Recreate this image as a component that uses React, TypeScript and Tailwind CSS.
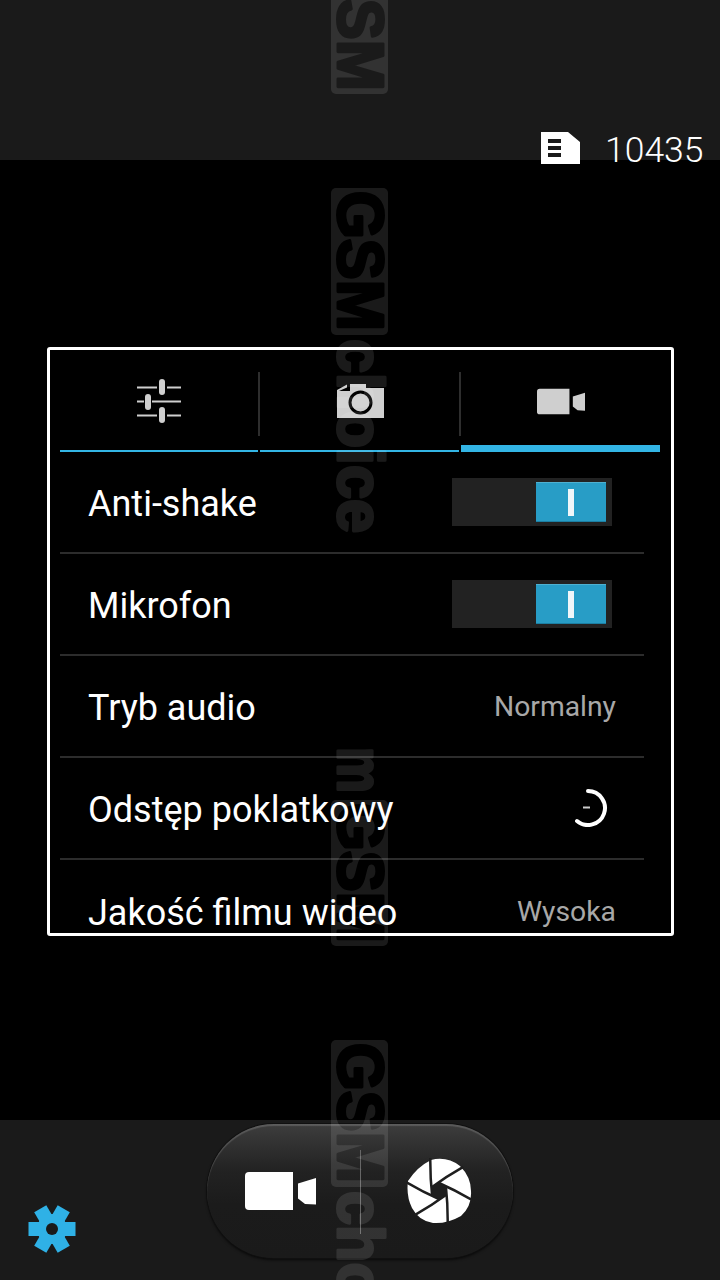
import React from "react";

function Sliders() {
  return (
    <svg width="44" height="44" viewBox="0 0 44 44" fill="none">
      <g stroke="#cfcfcf" strokeWidth="2.2">
        <path d="M0 8.500H20M30 8.500H44M0 22.500H7M15 22.500H44M0 36.500H20M30 36.500H44" />
      </g>
      <g fill="#cfcfcf">
        <rect x="22" y="0" width="6" height="16" rx="3" />
        <rect x="8" y="15" width="6" height="16" rx="3" />
        <rect x="22" y="28" width="6" height="16" rx="3" />
      </g>
    </svg>
  );
}

function Camera() {
  return (
    <svg width="47" height="35" viewBox="0 0 47 35">
      <path d="M0 7L10 1.500V4.500L2 8H13V1H29V5H47V35H0Z" fill="#cfcfcf" />
      <circle cx="23.500" cy="19.500" r="10.500" fill="#cfcfcf" stroke="#000" strokeWidth="3" />
    </svg>
  );
}

function Video({ color, w, h }: { color: string; w: number; h: number }) {
  return (
    <svg width={w} height={h} viewBox="0 0 71 38" fill={color}>
      <path d="M4 0H48V38H4Q0 38 0 34V4Q0 0 4 0Z" />
      <path d="M53 11.500L71 6V32.500L60 32 53 26.500Z" />
    </svg>
  );
}

function Shutter() {
  const angles = [0, 60, 120, 180, 240, 300];
  return (
    <svg width="66" height="66" viewBox="-33 -33 66 66">
      <path
        d="M-8 -31Q8 -35 21 -25Q32 -14 32 0Q33 15 22 25Q8 33 -6 32Q-20 30 -27 17Q-33 5 -31 -10Q-22 -24 -8 -31Z"
        fill="#fff"
      />
      {angles.map((a) => (
        <path
          key={a}
          d="M-33 -9Q-16 1 0 8"
          fill="none"
          stroke="#1e1e1e"
          strokeWidth="2.500"
          transform={`rotate(${a})`}
        />
      ))}
      <polygon points="0,8.500 7.400,4.250 7.400,-4.250 0,-8.500 -7.400,-4.250 -7.400,4.250" fill="#1e1e1e" />
    </svg>
  );
}

function Gear() {
  const angles = [0, 60, 120];
  return (
    <svg width="48" height="48" viewBox="-24 -24 48 48">
      <circle r="15" fill="#2fb1e6" />
      {angles.map((a) => (
        <rect
          key={a}
          x="-23.500"
          y="-7"
          width="47"
          height="14"
          fill="#2fb1e6"
          transform={`rotate(${a})`}
        />
      ))}
      <circle r="6" fill="#1a1a1a" />
    </svg>
  );
}

function Timer() {
  return (
    <svg width="36" height="38" viewBox="0 0 36 38" fill="none">
      <path d="M16 2A17 17 0 1 1 5 32" stroke="#fff" strokeWidth="4" strokeLinecap="round" />
      <path d="M11 18.500H18" stroke="#ccc" strokeWidth="2" />
    </svg>
  );
}

function Toggle() {
  return (
    <div className="flex h-[48px] w-[160px] items-center justify-end bg-[#222222] pr-[6px]">
      <div className="flex h-[40px] w-[70px] items-center justify-center border-t border-b border-t-[#4fb0d0] border-b-[#1c7fa3] bg-[#289dc6]">
        <div className="h-[27px] w-[6px] bg-[#f0f6f9]" />
      </div>
    </div>
  );
}

function Row({ label, children, last }: { label: string; children: React.ReactNode; last?: boolean }) {
  return (
    <div className={`flex h-[102px] w-[584px] shrink-0 items-center justify-between ${last ? "" : "border-b-2 border-[#2c2c2c]"}`}>
      <span className="pt-[4px] pl-[28px] text-[36px] leading-none text-white">{label}</span>
      {children}
    </div>
  );
}

function Value({ text }: { text: string }) {
  return <span className="pt-[3px] pr-[28px] text-[28.300px] leading-none text-[#a8a8a8]">{text}</span>;
}

const wm = { fontFamily: "'Liberation Sans', sans-serif", fontWeight: 700, fontSize: 64 } as const;

function Watermark() {
  const boxes = [
    { y: -52, h: 146 },
    { y: 188, h: 147 },
    { y: 800, h: 146 },
    { y: 1040, h: 147 },
  ];
  return (
    <svg className="pointer-events-none absolute top-0 left-0" width="720" height="1280">
      <defs>
        <mask id="cut" maskUnits="userSpaceOnUse" x="0" y="-60" width="720" height="1400">
          <rect x="0" y="-60" width="720" height="1400" fill="#fff" />
          {boxes.map((b) => (
            <text
              key={b.y}
              transform={`translate(337.500 ${b.y + 3}) rotate(90)`}
              fill="#000"
              stroke="#000"
              strokeWidth="3"
              strokeLinejoin="round"
              textLength="140"
              lengthAdjust="spacingAndGlyphs"
              style={wm}
            >
              GSM
            </text>
          ))}
        </mask>
      </defs>
      <g opacity="0.1" fill="#fff">
        <g mask="url(#cut)">
          {boxes.map((b) => (
            <rect key={b.y} x="331" y={b.y} width="57" height={b.h} rx="5" />
          ))}
        </g>
        <g stroke="#fff" strokeWidth="3" strokeLinejoin="round">
          <text transform="translate(337.500 339) rotate(90)" textLength="194" lengthAdjust="spacingAndGlyphs" style={wm}>choice</text>
          <text transform="translate(337.500 1191) rotate(90)" textLength="194" lengthAdjust="spacingAndGlyphs" style={wm}>choice</text>
          <text transform="translate(337.500 747) rotate(90)" textLength="46" lengthAdjust="spacingAndGlyphs" style={wm}>m</text>
        </g>
      </g>
    </svg>
  );
}

export default function App() {
  return (
    <div className="relative flex h-[1280px] w-[720px] flex-col overflow-hidden bg-black font-['Roboto',sans-serif]">
      <div className="h-[160px] shrink-0 bg-[#1a1a1a]" />

      <div className="flex-1 pt-[187px] pl-[47px]">
        <div className="h-[589px] w-[627px] overflow-hidden rounded-[3px] border-[3px] border-white pl-[10px]">
          <div className="flex h-[102px] w-[600px] items-stretch">
            <div className="flex w-[198px] items-center justify-center border-b-2 border-[#33b5e5] pt-[2px]">
              <Sliders />
            </div>
            <div className="mt-[22px] mb-[16px] w-[2px] bg-[#2e2e2e]" />
            <div className="flex w-[199px] items-center justify-center border-b-2 border-[#33b5e5] pt-[1px] pl-[2px]">
              <Camera />
            </div>
            <div className="mt-[22px] mb-[16px] w-[2px] bg-[#2e2e2e]" />
            <div className="flex w-[199px] items-center justify-center border-b-[7px] border-[#33b5e5] pt-[8px]">
              <Video color="#cfcfcf" w={48} h={27} />
            </div>
          </div>
          <Row label="Anti-shake">
            <div className="pr-[32px]"><Toggle /></div>
          </Row>
          <Row label="Mikrofon">
            <div className="pr-[32px]"><Toggle /></div>
          </Row>
          <Row label="Tryb audio">
            <Value text="Normalny" />
          </Row>
          <Row label="Odstęp poklatkowy">
            <div className="pr-[36px]"><Timer /></div>
          </Row>
          <Row label="Jakość filmu wideo" last>
            <Value text="Wysoka" />
          </Row>
        </div>
      </div>

      <div className="grid h-[160px] shrink-0 grid-cols-[207px_306px_207px] bg-[#1a1a1a]">
        <div className="pt-[85px] pl-[28px]">
          <Gear />
        </div>
        <div className="relative mt-[4px] flex h-[134px] items-center justify-between rounded-full bg-[linear-gradient(to_bottom,#3d3d3d_0%,#222222_35%,#1b1b1b_60%,#1a1a1a_100%)] pr-[41px] pl-[38px] shadow-[inset_0_2px_1px_rgba(255,255,255,0.16),0_0_0_1px_#101010,0_2px_3px_rgba(0,0,0,0.7)]">
          <Video color="#fff" w={71} h={38} />
          <Shutter />
          <div className="absolute top-[26px] left-[153px] h-[84px] w-px bg-[#666666]" />
        </div>
        <div />
      </div>

      <div className="absolute top-[132px] left-[541px] flex items-center">
        <svg width="39" height="32" viewBox="0 0 39 32">
          <path fillRule="evenodd" fill="#fff" d="M0 0H27L39 10V32H0ZM7 7V11H20V7ZM7 14V18H20V14ZM7 21V25H20V21Z" />
        </svg>
      </div>
      <span className="absolute top-[130px] left-[605px] text-[35.500px] leading-[40px] font-light text-white">10435</span>

      <Watermark />
    </div>
  );
}
